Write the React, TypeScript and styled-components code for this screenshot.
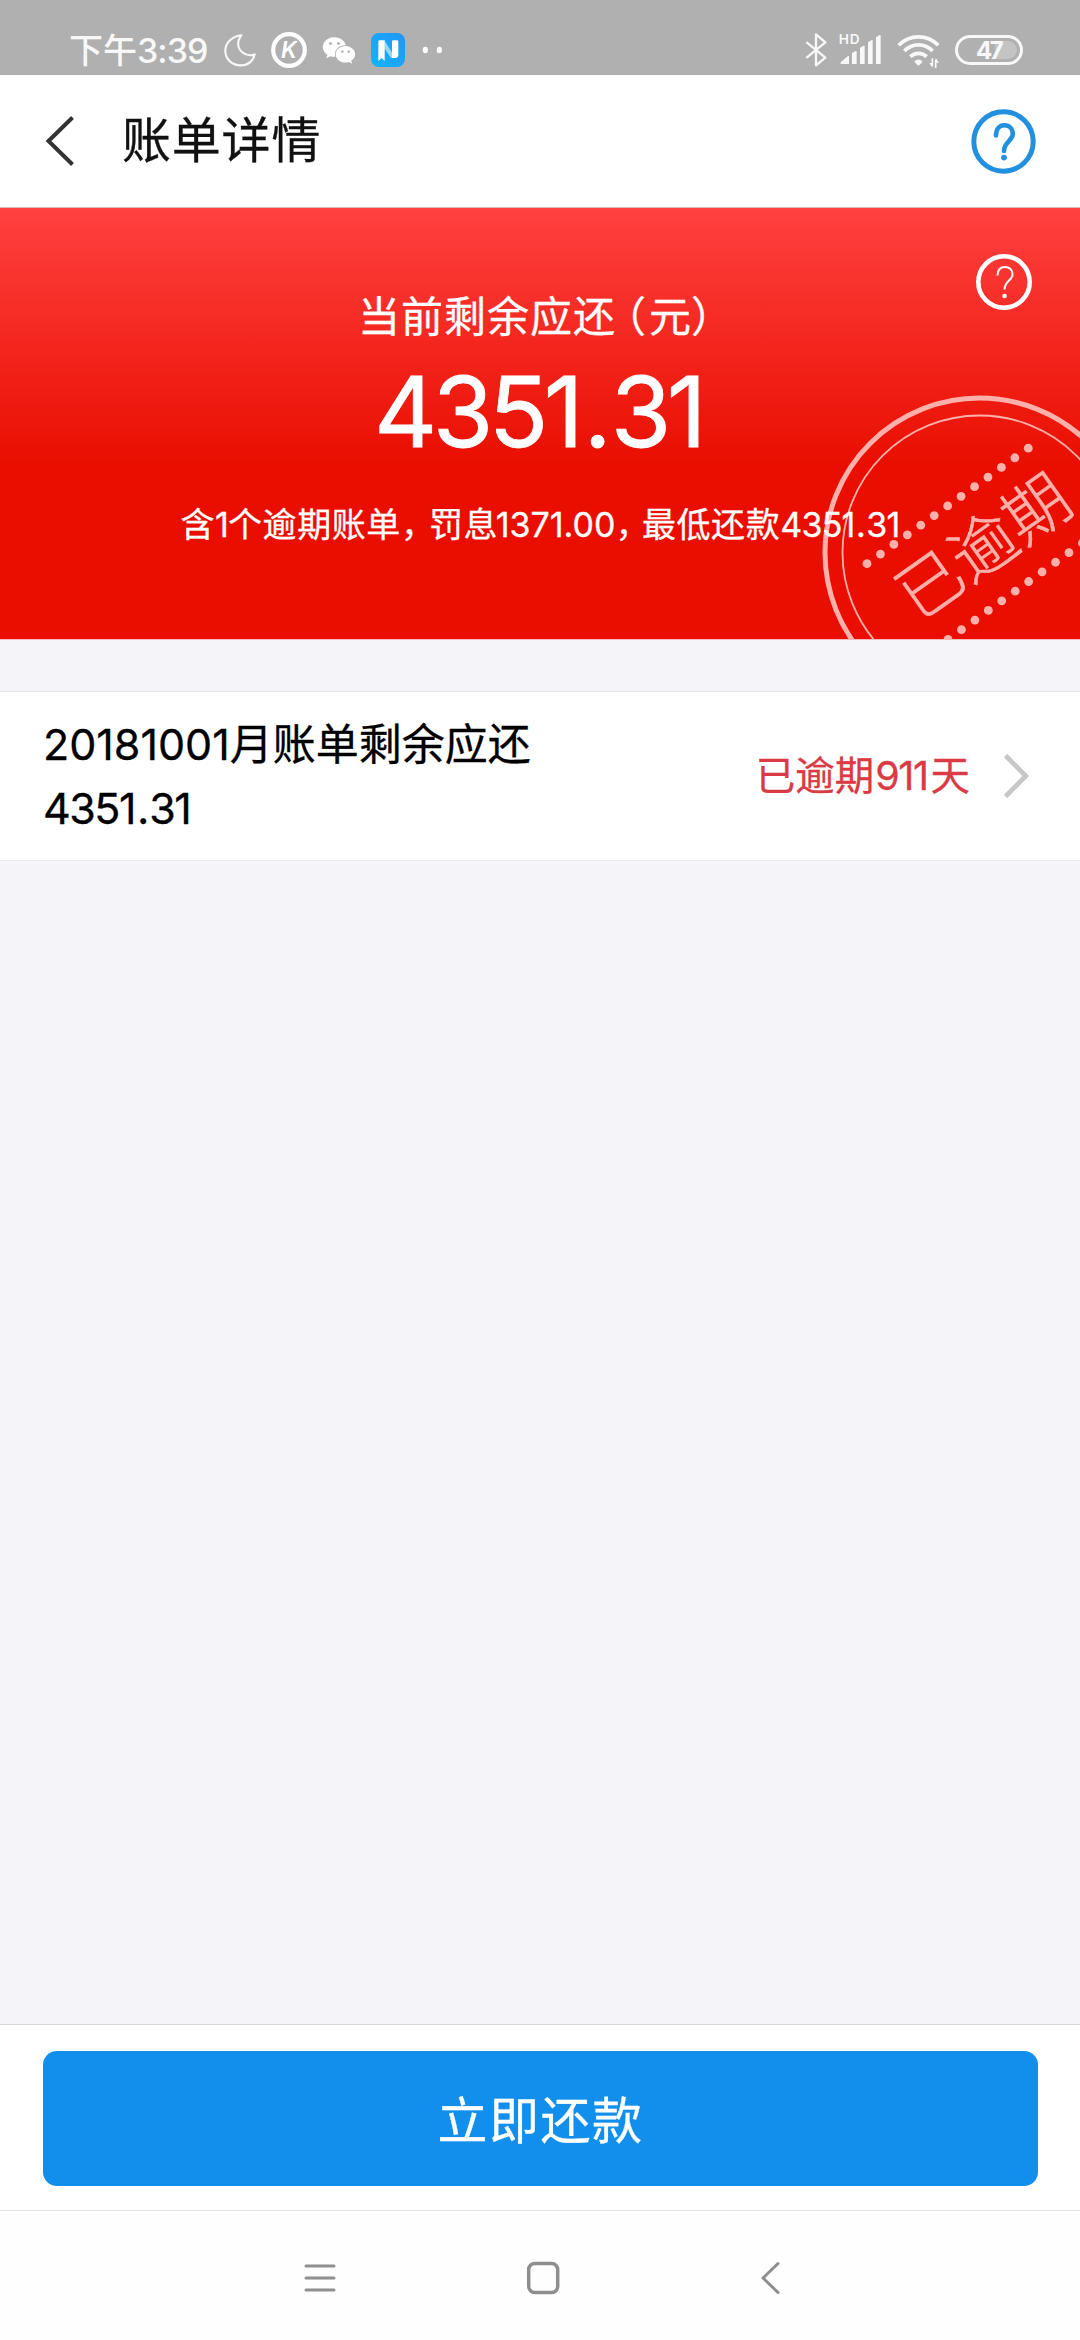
import React from "react";
import styled, { createGlobalStyle } from "styled-components";
import { FaWeixin } from "react-icons/fa";

const Global = createGlobalStyle`
  * { box-sizing: border-box; }
  body { margin: 0; background: #f4f4f9; }
  svg { display: block; flex: none; overflow: visible; }
`;

const Screen = styled.div`
  width: 1080px;
  height: 2340px;
  display: flex;
  flex-direction: column;
  overflow: hidden;
  background: #f4f4f9;
  color: #000;
  font-family: Inter, "Noto Sans CJK SC", sans-serif;
  -webkit-text-stroke-width: 0.3px;
`;

/* Inline run with its own tracking and side bearings */
const Run = styled.span<{ $track?: number; $before?: number; $after?: number }>`
  letter-spacing: ${(p) => p.$track ?? 0}px;
  margin-left: ${(p) => p.$before ?? 0}px;
  margin-right: ${(p) => p.$after ?? 0}px;
`;

/* Decimal point with wider side bearings, in proportion to the digits */
const Point = styled.span`
  margin-left: 0.045em;
  margin-right: 0.035em;
`;

/* Full-width punctuation set on a half-width body */
const Bracket = styled(Run)`
  font-feature-settings: "halt";
`;

const Comma = styled.span<{ $width: number }>`
  display: inline-block;
  width: ${(p) => p.$width}px;
  font-feature-settings: "halt";
`;

/* ---------- status bar ---------- */

const StatusBar = styled.div`
  height: 75px;
  flex: none;
  display: flex;
  align-items: center;
  justify-content: space-between;
  padding: 25px 57px 0 69px;
  background: #b0b0b0;
  color: #f8f8f8;
  -webkit-text-stroke-width: 0;
`;

const StatusGroup = styled.div`
  display: flex;
  align-items: center;
  gap: 15px;
`;

const Clock = styled.div`
  width: 140px;
  padding-top: 2px;
  font-size: 34px;
  line-height: 46px;
  font-weight: 500;
  white-space: nowrap;
`;

const WeChat = styled(FaWeixin)`
  width: 34px;
  height: 31px;
  color: #fff;
`;

const Moon = () => (
  <svg width="32" height="33" viewBox="41 23 99 102" fill="none" stroke="#f8f8f8" strokeWidth="6.5" strokeLinejoin="round">
    <path d="M95 27C67 30 45 49 45 75C45 102 67 120 93 120C115 120 132 107 136 86C121 91 108 88 98 80C82 67 80 45 95 27Z" />
  </svg>
);

const KBadge = () => (
  <svg width="36" height="36" viewBox="0 0 36 36">
    <circle cx="18" cy="18" r="15.8" fill="none" stroke="#fff" strokeWidth="4.2" />
    <text x="17.8" y="26" textAnchor="middle" fontFamily="Inter, sans-serif" fontSize="22.5" fontWeight="600" fontStyle="italic" fill="#fff">K</text>
  </svg>
);

const NotesBadge = () => (
  <svg width="34" height="34" viewBox="0 0 102 102">
    <defs>
      <linearGradient id="notes" x1="0" y1="1" x2="1" y2="0">
        <stop offset="0" stopColor="#14b4fb" />
        <stop offset="1" stopColor="#2196f3" />
      </linearGradient>
    </defs>
    <rect width="102" height="102" rx="24" fill="url(#notes)" />
    <path d="M40 22L64 60V75H60L40 46Z" fill="#fff" opacity="0.55" />
    <path d="M22 26Q22 22 26 22H41V84L31.5 75L22 84Z" fill="#fff" />
    <path d="M63 26Q63 22 67 22H78Q82 22 82 26V66Q82 75 73 75H63Z" fill="#fff" />
  </svg>
);

const MoreDots = () => (
  <svg width="24" height="8" viewBox="-2 0 24 8" fill="#fff">
    <ellipse cx="3.3" cy="4" rx="2.6" ry="3.2" />
    <ellipse cx="17.3" cy="4" rx="2.6" ry="3.2" />
  </svg>
);

const BluetoothIcon = () => (
  <svg width="19" height="34" viewBox="16 24 57 102" fill="none" stroke="#f8f8f8" strokeWidth="7" strokeLinecap="round" strokeLinejoin="round">
    <path d="M22 53L77 98L49 121V28L77 52L22 97" />
  </svg>
);

const SignalIcon = () => (
  <svg width="43" height="34" viewBox="118 24 129 102" fill="#f8f8f8">
    <text x="117" y="58" fontFamily="Inter, sans-serif" fontSize="41" fontWeight="600" letterSpacing="3">HD</text>
    <path d="M123 117V112L144 94Q148 92 148 96V117Z" />
    <path d="M157 117V84L168 78Q171 77 171 81V117Z" />
    <path d="M181 117V68L192 62Q195 61 195 65V117Z" />
    <path d="M205 117V52L216 45Q219 44 219 48V117Z" />
    <path d="M229 117V37L240 30Q243 29 243 33V117Z" />
  </svg>
);

const WifiIcon = () => (
  <svg width="43" height="34" viewBox="290 24 129 102" fill="none" stroke="#f8f8f8" strokeWidth="11">
    <path d="M295 61A82 82 0 0 1 414 61" />
    <path d="M312 78A58 58 0 0 1 397 78" />
    <path d="M330 95A35 35 0 0 1 379 95" />
    <path d="M342 109Q354 98 367 109Q362 118 354 122Q347 118 342 109Z" fill="#f8f8f8" stroke="none" />
    <path d="M396 100V124M406 104V129" strokeWidth="5" />
    <path d="M387 114H396V128ZM416 113H406V99Z" fill="#f8f8f8" stroke="none" />
  </svg>
);

const BatteryIcon = () => (
  <svg width="68" height="30" viewBox="0 0 68 30">
    <rect x="1.5" y="1.5" width="65" height="27" rx="13.5" fill="none" stroke="#f8f8f8" strokeWidth="3" />
    <path d="M40 6H53A9 9 0 0 1 53 24H40Z" fill="#fff" opacity="0.25" />
    <text x="21" y="24" fontFamily="Inter, sans-serif" fontSize="24" fontWeight="700" letterSpacing="-2.4" fill="#f8f8f8">47</text>
  </svg>
);

/* ---------- header ---------- */

const Header = styled.header`
  height: 133px;
  flex: none;
  display: flex;
  align-items: center;
  padding: 0 44px 0 45px;
  background: #fff;
  border-bottom: 1px solid #e2b6b6;
`;

const Title = styled.h1`
  flex: 1;
  margin: 0 0 0 47px;
  font-size: 49px;
  line-height: 64px;
  font-weight: 400;
  letter-spacing: 0.8px;
  color: #111;
`;

const BackIcon = () => (
  <svg width="30" height="50" viewBox="0 0 30 50" fill="none" stroke="#333" strokeWidth="4">
    <path d="M27.5 1.5L3.500 25L27.5 48.5" />
  </svg>
);

const HelpIcon = () => (
  <svg width="65" height="65" viewBox="0 0 65 65" fill="none" stroke="#238fdf" strokeWidth="5">
    <circle cx="32.5" cy="32.5" r="29.7" />
    <path d="M25 26.5C25 20 28.5 16.3 33.3 16.3C38.5 16.3 41.8 20 41.8 25C41.8 32 33 32.5 33 42" strokeWidth="4.6" strokeLinecap="round" />
    <circle cx="33" cy="48.6" r="2.9" fill="#238fdf" stroke="none" />
  </svg>
);

/* ---------- balance banner ---------- */

const Banner = styled.section`
  position: relative;
  height: 432px;
  flex: none;
  display: flex;
  flex-direction: column;
  align-items: center;
  padding-top: 79px;
  overflow: hidden;
  border-bottom: 1px solid #f9b9b9;
  background: linear-gradient(#ff4140 0, #e90e00 258px);
  color: #fff;
  white-space: nowrap;
`;

const BannerLabel = styled.div`
  padding-right: 9px;
  font-size: 42px;
  line-height: 60px;
  letter-spacing: 1px;
`;

const Amount = styled.div`
  margin-top: 15px;
  padding-right: 4px;
  font-size: 98px;
  line-height: 100px;
  letter-spacing: -4.5px;
  -webkit-text-stroke-width: 0.8px;
`;

const BannerNote = styled.div`
  position: relative;
  z-index: 1;
  margin-top: 38px;
  font-size: 34px;
  line-height: 50px;
  letter-spacing: 0.6px;
`;

const BannerHelp = styled.div`
  position: absolute;
  top: 46px;
  right: 48px;
`;

const Stamp = styled.svg`
  position: absolute;
  right: 0;
  bottom: -1px;
`;

const dots = (x: number, y: number, count: number) =>
  Array.from({ length: count }, (_, i) => (
    <circle key={i} cx={x + i * 13.44} cy={y - i * 9.63} r="4.4" />
  ));

const OverdueStamp = () => (
  <Stamp width="258" height="245" viewBox="822 395 258 245" fill="#ffb0aa">
    <circle cx="979.5" cy="552.5" r="154.5" fill="none" stroke="#ffb0aa" strokeWidth="5" />
    <circle cx="979.5" cy="552.5" r="137" fill="none" stroke="#ffb0aa" strokeWidth="1.8" />
    {dots(867, 563.7, 13)}
    {dots(948, 639.3, 11)}
    <text
      transform="translate(983 546) rotate(-35.3)"
      textAnchor="middle"
      y="24"
      fontFamily='"Noto Sans CJK SC", sans-serif'
      fontWeight="300"
      fontSize="65"
      stroke="#ffb0aa"
      strokeWidth="0.6"
    >
      已逾期
    </text>
  </Stamp>
);

/* ---------- bill row ---------- */

const BillRow = styled.div`
  height: 170px;
  flex: none;
  display: flex;
  align-items: center;
  margin-top: 51px;
  padding: 0 50px 0 43px;
  background: #fff;
  border-top: 1px solid #e6e6ea;
  border-bottom: 1px solid #ececef;
`;

const BillTitle = styled.div`
  flex: 1;
  font-size: 43px;
  line-height: 64px;
`;

const Overdue = styled.div`
  margin-right: 33px;
  font-size: 39.5px;
  line-height: 60px;
  color: #da3a43;
`;

const ChevronIcon = () => (
  <svg width="27" height="46" viewBox="0 0 27 46" fill="none" stroke="#c8c8cc" strokeWidth="4.8">
    <path d="M2.5 2.5L22.8 23L2.5 43.5" />
  </svg>
);

/* ---------- footer ---------- */

const Spacer = styled.div`
  flex: 1;
`;

const Footer = styled.footer`
  height: 186px;
  flex: none;
  padding: 26px 42px 0 43px;
  background: #fff;
  border-top: 1px solid #d6d6da;
`;

const PayButton = styled.button`
  display: block;
  width: 100%;
  height: 135px;
  padding: 5px 0 0;
  border: 0;
  border-radius: 14px;
  background: #128eec;
  color: #fff;
  font-family: inherit;
  font-size: 50px;
  line-height: 60px;
  letter-spacing: 1.5px;
`;

const NavBar = styled.nav`
  height: 130px;
  flex: none;
  display: flex;
  align-items: center;
  gap: 192px;
  padding: 5px 0 0 303px;
  background: #fefefe;
  border-top: 1px solid #e2e2e2;
`;

const NavIcon = styled.svg`
  width: 34px;
  height: 34px;
  fill: none;
  stroke: #8e8e8e;
  stroke-width: 3;
  stroke-linecap: round;
  stroke-linejoin: round;
`;

export default function App() {
  return (
    <Screen>
      <Global />
      <StatusBar>
        <StatusGroup>
          <Clock>
            下午<Run $track={-1}>3:39</Run>
          </Clock>
          <Moon />
          <KBadge />
          <WeChat />
          <NotesBadge />
          <MoreDots />
        </StatusGroup>
        <StatusGroup>
          <BluetoothIcon />
          <SignalIcon />
          <WifiIcon />
          <BatteryIcon />
        </StatusGroup>
      </StatusBar>

      <Header>
        <BackIcon />
        <Title>账单详情</Title>
        <HelpIcon />
      </Header>

      <Banner>
        <BannerHelp>
          <svg width="56" height="56" viewBox="0 0 56 56" fill="none" stroke="#fff">
            <circle cx="28" cy="28" r="25.7" strokeWidth="4.6" />
            <path d="M21.5 21.5C21.5 16 24.5 13 29 13C33.5 13 36.5 16 36.5 20.5C36.5 26.5 28.5 27 28.5 35.5" strokeWidth="2" />
            <circle cx="28.5" cy="42" r="2.3" fill="#fff" stroke="none" />
          </svg>
        </BannerHelp>
        <BannerLabel>
          当前剩余应还
          <Bracket $track={1} $before={9}>（</Bracket>
          <Run $track={1} $before={2}>元</Run>
          <Bracket $track={1} $before={-1}>）</Bracket>
        </BannerLabel>
        <Amount>
          4351<Point>.</Point>31
        </Amount>
        <BannerNote>
          含<Run $after={-1}>1</Run>个逾期账单<Comma $width={28}>，</Comma>罚息
          <Run $before={-2.5}>1371.00</Run>
          <Comma $width={26.5}>，</Comma>最低还款
          <Run $track={-0.8}>
            4351<Point>.</Point>31
          </Run>
        </BannerNote>
        <OverdueStamp />
      </Banner>

      <BillRow>
        <BillTitle>
          20181001月账单剩余应还
          <br />
          <Run $track={-1.5}>
            4351<Point>.</Point>31
          </Run>
        </BillTitle>
        <Overdue>
          已逾期<Run $track={-1.5} $before={1} $after={3}>911</Run>天
        </Overdue>
        <ChevronIcon />
      </BillRow>

      <Spacer />

      <Footer>
        <PayButton>立即还款</PayButton>
      </Footer>
      <NavBar>
        <NavIcon viewBox="0 0 34 34">
          <path d="M3 5H31M3 17H31M3 29H31" />
        </NavIcon>
        <NavIcon viewBox="0 0 34 34">
          <rect x="-0.3" y="2.5" width="29" height="29" rx="6" strokeWidth="3.5" />
        </NavIcon>
        <NavIcon viewBox="0 0 34 34">
          <path d="M23 2.5L8 17L23 31.5" />
        </NavIcon>
      </NavBar>
    </Screen>
  );
}
